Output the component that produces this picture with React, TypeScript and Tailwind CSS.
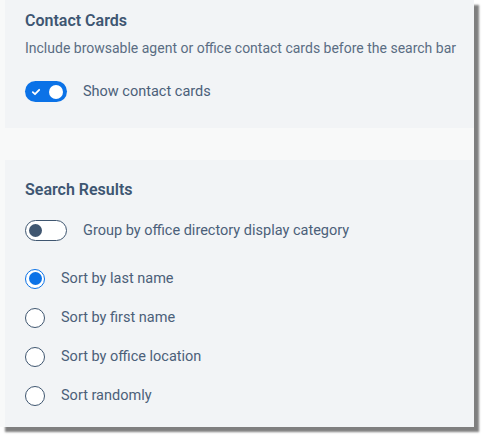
import { useState } from "react";

const sortOptions = [
  { id: "last", label: "Sort by last name" },
  { id: "first", label: "Sort by first name" },
  { id: "office", label: "Sort by office location" },
  { id: "random", label: "Sort randomly" },
];

function Toggle({ on, onClick }: { on: boolean; onClick: () => void }) {
  if (on) {
    return (
      <button
        onClick={onClick}
        className="relative w-[42px] h-[21px] rounded-full bg-[#0b72e7] flex items-center justify-between px-[4px] shrink-0"
      >
        <svg width="10" height="10" viewBox="0 0 10 10" className="ml-[2px]">
          <path d="M1.8 5.2 L4 7.2 L8.2 2.8" fill="none" stroke="white" strokeWidth="1.8" strokeLinecap="round" strokeLinejoin="round" />
        </svg>
        <span className="w-[14px] h-[14px] rounded-full bg-white" />
      </button>
    );
  }
  return (
    <button
      onClick={onClick}
      className="relative w-[42px] h-[21px] rounded-full bg-white border-[1.5px] border-[#3f5670] flex items-center px-[2.5px] shrink-0"
    >
      <span className="w-[13px] h-[13px] rounded-full bg-[#3f5670]" />
    </button>
  );
}

export default function App() {
  const [showCards, setShowCards] = useState(true);
  const [groupBy, setGroupBy] = useState(false);
  const [sort, setSort] = useState("last");

  return (
    <div
      className="w-[490px] h-[443px] bg-white"
      style={{ fontFamily: "Roboto, 'Liberation Sans', sans-serif" }}
    >
      <div className="w-[474px] h-[427px] bg-[#f8f9f9] pl-[5px] shadow-[5px_5px_2px_rgba(0,0,0,0.5)] flex flex-col">
        {/* contact cards */}
        <div className="bg-[#f2f4f6] h-[128px] pl-[20px] pt-[10px]">
          <h2 className="text-[16px] font-semibold text-[#3e5672] leading-[22px]">Contact Cards</h2>
          <p className="text-[14px] text-[#5a6d83] leading-[18px] mt-[7px] whitespace-nowrap">
            Include browsable agent or office contact cards before the search bar
          </p>
          <div className="flex items-center gap-[16px] mt-[24px]">
            <Toggle on={showCards} onClick={() => setShowCards(!showCards)} />
            <span className="text-[14.5px] text-[#4b6079]">Show contact cards</span>
          </div>
        </div>

        {/* search results */}
        <div className="bg-[#f2f4f6] flex-1 mt-[32px] pl-[20px] pt-[19px]">
          <h2 className="text-[16px] font-semibold text-[#3e5672] leading-[22px]">Search Results</h2>
          <div className="flex items-center gap-[16px] mt-[19px]">
            <Toggle on={groupBy} onClick={() => setGroupBy(!groupBy)} />
            <span className="text-[14.5px] text-[#4b6079]">Group by office directory display category</span>
          </div>
          <div className="flex flex-col gap-[19px] mt-[27px]">
            {sortOptions.map((opt) => (
              <label key={opt.id} className="flex items-center gap-[16px] cursor-pointer">
                {sort === opt.id ? (
                  <span className="w-[20px] h-[20px] rounded-full border-[1.5px] border-[#0b72e7] bg-white flex items-center justify-center">
                    <span className="w-[13px] h-[13px] rounded-full bg-[#0b72e7]" />
                  </span>
                ) : (
                  <span className="w-[20px] h-[20px] rounded-full border-[1.5px] border-[#3f5670] bg-white" />
                )}
                <input type="radio" className="hidden" checked={sort === opt.id} onChange={() => setSort(opt.id)} />
                <span className="text-[14.5px] text-[#4b6079] leading-[20px]">{opt.label}</span>
              </label>
            ))}
          </div>
        </div>
      </div>
    </div>
  );
}
